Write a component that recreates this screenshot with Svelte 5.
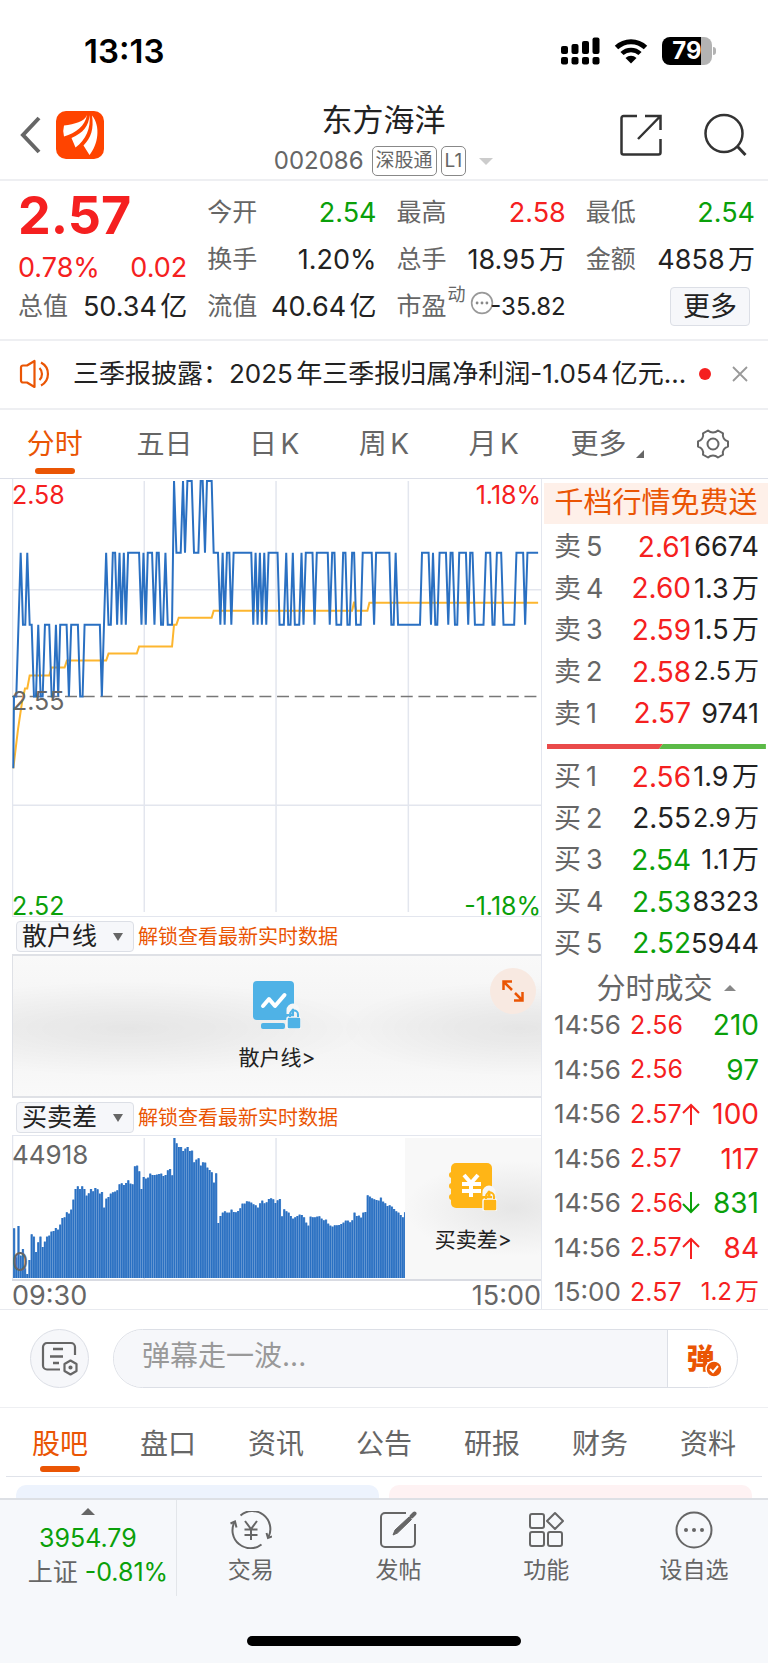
<script>
  const periods = ['分时', '五日', '日K', '周K', '月K'];
  const sections = ['股吧', '盘口', '资讯', '公告', '研报', '财务', '资料'];

  const sells = [
    { side: '卖', level: 5, price: '2.61', tone: 'up', qty: '6674' },
    { side: '卖', level: 4, price: '2.60', tone: 'up', qty: '1.3万' },
    { side: '卖', level: 3, price: '2.59', tone: 'up', qty: '1.5万' },
    { side: '卖', level: 2, price: '2.58', tone: 'up', qty: '2.5万', small: true },
    { side: '卖', level: 1, price: '2.57', tone: 'up', qty: '9741' }
  ];
  const buys = [
    { side: '买', level: 1, price: '2.56', tone: 'up', qty: '1.9万' },
    { side: '买', level: 2, price: '2.55', tone: 'flat', qty: '2.9万', small: true },
    { side: '买', level: 3, price: '2.54', tone: 'down', qty: '1.1万' },
    { side: '买', level: 4, price: '2.53', tone: 'down', qty: '8323' },
    { side: '买', level: 5, price: '2.52', tone: 'down', qty: '5944' }
  ];
  const trades = [
    { time: '14:56', price: '2.56', dir: '', qty: '210', tone: 'down' },
    { time: '14:56', price: '2.56', dir: '', qty: '97', tone: 'down' },
    { time: '14:56', price: '2.57', dir: 'up', qty: '100', tone: 'up' },
    { time: '14:56', price: '2.57', dir: '', qty: '117', tone: 'up' },
    { time: '14:56', price: '2.56', dir: 'down', qty: '831', tone: 'down' },
    { time: '14:56', price: '2.57', dir: 'up', qty: '84', tone: 'up' },
    { time: '15:00', price: '2.57', dir: '', qty: '1.2万', tone: 'up', small: true }
  ];

  // Price levels of the intraday line: A 2.58, B 2.57, C 2.56, D 2.55, E 2.54.
  const levelY = { A: 2, B: 74, C: 146, D: 218, E: 290 };
  const ticks =
    '40E 42D 49D 62B 69C 76C 82B 89C 95C 102D 108D 115C 122D 128D 135C 148C 155D 161D 168C 175D 181C 200C 207D 214C 234C 241D 248D 254C 300C 306D ' +
    '319B 326C 333C 339B 346B 352C 359B 365C 372B 378C 385B 418B 425C 431B 438C 444B 457B 464C 471B 477B 484C 490C 497B 504C 517C ' +
    '523A 530B 543B 550A 556B 563A 576A 583B 596B 603A 609A 616B 622A 636A 642B 655B 662C 669B 675C 682B 689B 695C 702B 755B 761C 768B 774C 781B 787C 794B 800C 807B 834B ' +
    '840C 853C 860B 866C 873C 880B 886C 899C 906B 912C 919B 939B 945C 952B 985B 991C 998B 1005B 1011C 1025C 1031B 1038B 1044C 1051C 1058B 1064B 1070C 1084C 1090B 1117B 1124C ' +
    '1130B 1170B 1176C 1183C 1189B 1196C 1262C 1268B 1288B 1295C 1301B 1308C 1314C 1321B 1340B 1347C 1354B 1360B 1367C 1374C 1380B 1400B 1407C 1413B 1420B 1427C 1453C ' +
    '1460B 1473B 1480C 1486C 1493B 1506B 1513C 1545C 1552B 1572B 1578C 1585B 1617B';
  const pricePoints = ticks
    .split(' ')
    .map((t) => `${(parseInt(t) / 3 - 12).toFixed(1)},${levelY[t.slice(-1)]}`)
    .join(' ');

  const average = [
    [40, 290], [54, 251], [66, 224], [75, 210], [82, 210], [89, 197], [148, 197], [155, 189], [194, 189], [201, 182],
    [319, 182], [326, 175], [411, 175], [418, 168], [517, 168], [523, 146], [530, 146], [537, 139], [636, 139],
    [642, 132], [1058, 132], [1064, 123], [1070, 132], [1104, 132], [1110, 124], [1617, 124]
  ];
  const averagePoints = average.map(([x, y]) => `${(x / 3 - 12).toFixed(1)},${y}`).join(' ');

  const volume = [
    149, 62, 156, 67, 87, 29, 12, 54, 131, 124, 78, 107, 124, 93, 109, 124, 127, 139, 141, 150, 145, 160, 180, 182, 197,
    193, 205, 235, 267, 275, 267, 275, 267, 247, 254, 267, 260, 270, 266, 253, 258, 211, 238, 243, 253, 257, 259, 263,
    281, 284, 279, 285, 293, 283, 281, 335, 337, 320, 267, 303, 298, 301, 313, 309, 309, 310, 312, 313, 306, 309, 323,
    327, 308, 420, 404, 393, 393, 381, 388, 393, 381, 382, 347, 355, 359, 337, 347, 346, 331, 324, 317, 286, 314, 165,
    186, 196, 200, 196, 196, 205, 198, 197, 201, 209, 223, 223, 230, 229, 226, 221, 218, 211, 224, 232, 224, 227, 237,
    239, 236, 225, 233, 237, 185, 206, 200, 196, 186, 178, 182, 186, 190, 189, 182, 166, 157, 184, 182, 182, 184, 185,
    178, 173, 175, 163, 157, 154, 158, 158, 159, 162, 166, 172, 172, 167, 173, 196, 186, 187, 181, 196, 198, 248, 244,
    239, 236, 234, 232, 241, 229, 224, 216, 218, 214, 207, 200, 196, 189, 182, 197
  ];
  const bars = volume.map((v, i) => ({ x: 1 + i * 2.2, h: v / 3 }));
</script>

{#snippet ladder(rows, name)}
  <table class="ladder" aria-label={name}>
    <tbody>
      {#each rows as row}
        <tr>
          <th scope="row"><span>{row.side}</span><span>{row.level}</span></th>
          <td class="price {row.tone}">{row.price}</td>
          <td class="qty" class:small={row.small}>{row.qty}</td>
        </tr>
      {/each}
    </tbody>
  </table>
{/snippet}

{#snippet lock(color)}
  <path d="M36 33v-4a4 4 0 0 1 8 0v4" fill="none" stroke="#f7f7f7" stroke-width="5" />
  <rect x="34" y="36" width="14" height="12" rx="2" fill={color} stroke="#f7f7f7" stroke-width="1.500" />
  <path d="M37 36v-2.500a4 4 0 0 1 8 0V36" fill="none" stroke={color} stroke-width="2" />
{/snippet}

<div class="phone">
  <div class="status">
    <time>13:13</time>
    <div class="status-icons">
      <svg width="39" height="28" viewBox="0 0 39 28" aria-hidden="true">
        <g>
          <rect x="0" y="9" width="7" height="8" rx="2" /><rect x="10.500" y="7" width="7" height="10" rx="2" />
          <rect x="21" y="4" width="7" height="13" rx="2" /><rect x="31.500" y="0.500" width="7" height="16.500" rx="2" />
          <rect x="0" y="20" width="7" height="7.500" rx="2" /><rect x="10.500" y="20" width="7" height="7.500" rx="2" />
          <rect x="21" y="20" width="7" height="7.500" rx="2" /><rect x="31.500" y="20" width="7" height="7.500" rx="2" />
        </g>
      </svg>
      <svg class="wifi" width="34" height="26" viewBox="0 0 34 26" aria-hidden="true">
        <path d="M2.500 9.500A21 21 0 0 1 31.500 9.500" fill="none" stroke="#000" stroke-width="5" />
        <path d="M8 15.500a13 13 0 0 1 18 0" fill="none" stroke="#000" stroke-width="4.500" />
        <path d="M11.500 20a8 8 0 0 1 11 0L17 25.500z" />
      </svg>
      <div class="battery"><span>79</span></div>
    </div>
  </div>

  <header>
    <div class="head-left">
      <button aria-label="返回">
        <svg width="22" height="38" viewBox="0 0 22 38"><path d="M19 2 3 19l16 17" fill="none" stroke="#666" stroke-width="4" /></svg>
      </button>
      <svg class="logo" width="48" height="48" viewBox="0 0 48 48" role="img" aria-label="东方财富">
        <rect width="48" height="48" rx="10" fill="#ff4400" />
        <g fill="#fff">
          <path d="M31 4C28 11 19 13 8 14.500q-1.500 5 0 11C20 22 29 15 31 4z" />
          <path d="M33.500 4C33 15 27 22 15.500 27l4 9.500C30 29 35 17 33.500 4z" />
          <path d="M36 4.500C38 18 35 27 27.500 34.500L33.500 44C42 34 45 15 36 4.500z" />
        </g>
      </svg>
    </div>
    <div class="title">
      <h1>东方海洋</h1>
      <p><span class="code">002086</span><span class="tag">深股通</span><span class="tag">L1</span><i class="caret"></i></p>
    </div>
    <div class="head-right">
      <button aria-label="分享">
        <svg width="44" height="44" viewBox="0 0 44 44" fill="none" stroke="#333" stroke-width="2.500">
          <path d="M18 3H4.500a2 2 0 0 0-2 2v34.500a2 2 0 0 0 2 2h35a2 2 0 0 0 2-2V26M26 3h15.500v14M41 3.500 19 26" />
        </svg>
      </button>
      <button aria-label="搜索">
        <svg width="44" height="44" viewBox="0 0 44 44" fill="none" stroke="#333" stroke-width="2.500">
          <circle cx="21" cy="20.500" r="18.500" /><path d="m34 33 8.500 9" stroke-width="3" />
        </svg>
      </button>
    </div>
  </header>

  <section class="quote">
    <div class="last up">
      <strong>2.57</strong>
      <div class="change"><span>0.78%</span><span>0.02</span></div>
    </div>
    <div class="cell"><span>今开</span><b class="down">2.54</b></div>
    <div class="cell"><span>最高</span><b class="up">2.58</b></div>
    <div class="cell"><span>最低</span><b class="down">2.54</b></div>
    <div class="cell"><span>换手</span><b>1.20%</b></div>
    <div class="cell"><span>总手</span><b>18.95万</b></div>
    <div class="cell"><span>金额</span><b>4858万</b></div>
    <div class="cell"><span>总值</span><b>50.34亿</b></div>
    <div class="cell"><span>流值</span><b>40.64亿</b></div>
    <div class="cell pe">
      <span>市盈<sup>动</sup></span>
      <b>
        <svg width="24" height="24" viewBox="0 0 22 22" aria-hidden="true">
          <circle cx="11" cy="11" r="9.500" fill="none" stroke="#999" stroke-width="1.500" />
          <g fill="#888"><circle cx="6.500" cy="11" r="1.300" /><circle cx="11" cy="11" r="1.300" /><circle cx="15.500" cy="11" r="1.300" /></g>
        </svg>-35.82
      </b>
    </div>
    <div class="cell end"><button class="more">更多</button></div>
  </section>

  <section class="notice">
    <svg width="34" height="30" viewBox="0 0 34 30" fill="none" stroke="#ea5504" stroke-width="2.200" aria-hidden="true">
      <path d="M2 8.500a2 2 0 0 1 2-2h4L15.500 2v26L8 23.500H4a2 2 0 0 1-2-2z" stroke-linejoin="round" />
      <path d="M20.500 9a8.500 8.500 0 0 1 0 12M22 3.500a13 13 0 0 1 0 23" />
    </svg>
    <a href="#notice">三季报披露：2025年三季报归属净利润-1.054亿元...</a>
    <i class="dot"></i>
    <button aria-label="关闭">
      <svg width="16" height="16" viewBox="0 0 16 16"><path d="m1 1 14 14M15 1 1 15" stroke="#999" stroke-width="1.800" /></svg>
    </button>
  </section>

  <nav class="tabs periods">
    {#each periods as name, i}
      <button class:active={i === 0}>{name}</button>
    {/each}
    <button class="other">更多<i class="corner"></i></button>
    <button aria-label="设置">
      <svg width="34" height="34" viewBox="0 0 34 34" fill="none" stroke="#666" stroke-width="2">
        <path d="M12 3.500c2 1.800 3.500 2 5 2s3-.2 5-2l5 2.800c-.6 2.700 0 4 .8 5.200.8 1.200 1.800 2.100 4.200 2.900v5.200c-2.400.8-3.400 1.700-4.200 2.900-.8 1.200-1.400 2.500-.8 5.200l-5 2.800c-2-1.800-3.500-2-5-2s-3 .2-5 2l-5-2.800c.6-2.700 0-4-.8-5.200-.8-1.200-1.800-2.100-4.200-2.900v-5.200c2.400-.8 3.400-1.700 4.200-2.900.8-1.200 1.400-2.500.8-5.200z" stroke-linejoin="round" />
        <circle cx="17" cy="17" r="5.500" />
      </svg>
    </button>
  </nav>

  <main>
    <div class="charts">
      <div class="chart price-chart">
        <svg viewBox="0 0 530 438" preserveAspectRatio="none" aria-label="分时走势">
          <g stroke="#e3e6ee" stroke-width="1.500">
            <path d="M0.500 0v438M132.500 2v432M264.500 2v432M397 2v432M0 111h530M0 327h530" />
          </g>
          <path d="M0 218h528" stroke="#777" stroke-width="1.500" stroke-dasharray="12 5.700" />
          <polyline points={averagePoints} fill="none" stroke="#fdb62f" stroke-width="2" />
          <polyline points={pricePoints} fill="none" stroke="#2a70c2" stroke-width="2" />
        </svg>
        <span class="mark tl up">2.58</span>
        <span class="mark tr up">1.18%</span>
        <span class="mark ml">2.55</span>
        <span class="mark bl down">2.52</span>
        <span class="mark br down">-1.18%</span>
      </div>

      <div class="indicator">
        <button class="pick">散户线<i></i></button>
        <a href="#unlock">解锁查看最新实时数据</a>
      </div>
      <div class="locked">
        <a href="#retail">
          <svg width="48" height="48" viewBox="0 0 48 48" aria-hidden="true">
            <rect width="41" height="39" rx="4" fill="#4fb2e6" />
            <path d="m10 25 6-7 6 7 9.500-11" fill="none" stroke="#fff" stroke-width="4" stroke-linecap="round" stroke-linejoin="round" />
            <rect x="8" y="42" width="24" height="6" rx="2" fill="#4fb2e6" />
            {@render lock('#4fb2e6')}
          </svg>
          散户线&gt;
        </a>
        <button class="expand" aria-label="展开">
          <svg width="22" height="22" viewBox="0 0 22 22" fill="none" stroke="#ea5504" stroke-width="2.500">
            <path d="M1.500 10V1.500H10M2 2l8 8M20.500 12v8.500H12M20 20l-7-7" />
          </svg>
        </button>
      </div>

      <div class="indicator">
        <button class="pick">买卖差<i></i></button>
        <a href="#unlock">解锁查看最新实时数据</a>
      </div>
      <div class="chart volume-chart">
        <svg viewBox="0 0 530 143" preserveAspectRatio="none" aria-label="买卖差">
          <path d="M0.500 0v143M132.500 2v141M264.500 2v141" stroke="#e3e6ee" stroke-width="1.500" />
          {#each bars as bar}
            <rect x={bar.x} y={142 - bar.h} width="2.300" height={bar.h} fill="#5a90d0" />
            <rect x={bar.x + 0.3} y={142 - bar.h} width="1.500" height={bar.h} fill="#2a70c2" />
          {/each}
        </svg>
        <span class="mark tl">44918</span>
        <span class="mark bl">0</span>
        <a class="volume-lock" href="#diff">
          <svg width="48" height="48" viewBox="0 0 48 48" aria-hidden="true">
            <rect x="2" width="41" height="45" rx="5" fill="#ffb516" />
            <g fill="#ffb516"><circle cx="3" cy="12" r="3" /><circle cx="3" cy="23" r="3" /><circle cx="3" cy="34" r="3" /></g>
            <path d="m15 12 7 8 7-8M22 20v14M13 21h19M13 28h19" fill="none" stroke="#fff" stroke-width="4" />
            {@render lock('#ffb516')}
          </svg>
          买卖差&gt;
        </a>
      </div>
      <div class="axis"><span>09:30</span><span>15:00</span></div>
    </div>

    <aside>
      <a class="banner" href="#depth">千档行情免费送</a>
      {@render ladder(sells, '卖盘')}
      <svg class="ratio" viewBox="0 0 219 5" preserveAspectRatio="none" aria-hidden="true">
        <path d="M0 0h116l-4 5H0z" fill="#ea4a4a" /><path d="M116 0h103v5H112z" fill="#5bba47" />
      </svg>
      {@render ladder(buys, '买盘')}
      <button class="trades-head">分时成交<i></i></button>
      <table class="trades" aria-label="分时成交">
        <tbody>
          {#each trades as t}
            <tr>
              <td class="time">{t.time}</td>
              <td class="up">{t.price}</td>
              <td class="arrow {t.dir}">
                {#if t.dir}
                  <svg width="18" height="22" viewBox="0 0 18 22" fill="none" stroke="currentColor" stroke-width="2">
                    <path d={t.dir === 'up' ? 'M9 22V2M1 10l8-8 8 8' : 'M9 0v20M1 12l8 8 8-8'} />
                  </svg>
                {/if}
              </td>
              <td class="amount {t.tone}" class:small={t.small}>{t.qty}</td>
            </tr>
          {/each}
        </tbody>
      </table>
    </aside>
  </main>

  <section class="comment">
    <button class="round" aria-label="弹幕设置">
      <svg width="38" height="36" viewBox="0 0 38 36" fill="none" stroke="#666" stroke-width="2.200">
        <path d="M19 28.500H6a4 4 0 0 1-4-4V6a4 4 0 0 1 4-4h24a4 4 0 0 1 4 4v8" />
        <path d="M12 8h10M9 15.500h13M12 22h6" stroke-width="2.500" />
        <path d="m29.500 19.500 6 3.500v7l-6 3.500-6-3.500v-7z" stroke-linejoin="round" /><circle cx="29.500" cy="26.500" r="1" />
      </svg>
    </button>
    <form>
      <input type="text" placeholder="弹幕走一波..." aria-label="弹幕" />
      <button type="button" aria-label="弹幕开关">
        <span>弹</span>
        <svg width="18" height="18" viewBox="-1 -1 18 18"><circle cx="8" cy="8" r="8" fill="#ea5504" stroke="#fff" stroke-width="1.500" /><path d="m4 8 3 3 5-6" fill="none" stroke="#fff" stroke-width="2" /></svg>
      </button>
    </form>
  </section>

  <nav class="tabs sections">
    {#each sections as name, i}
      <button class:active={i === 0}>{name}</button>
    {/each}
  </nav>
  <div class="cards"><div class="card blue"></div><div class="card pink"></div></div>

  <footer>
    <div class="bar">
      <button class="index">
        <i></i>
        <span class="down">3954.79</span>
        <span>上证 <b class="down">-0.81%</b></span>
      </button>
      <button>
        <svg width="42" height="38" viewBox="0 0 42 38" fill="none" stroke="#666" stroke-width="2">
          <path d="M10.500 4.500A18 18 0 0 1 38.500 26M31.500 33.500A18 18 0 0 1 4.500 11" />
          <path d="M0.500 12.500 5 10.500l1.500 6M42 25.500 38 27l-1.500-5" />
          <path d="m15 10 6 8 6-8M21 18v11M14.500 18.500h13M14.500 24h13" />
        </svg>
        交易
      </button>
      <button>
        <svg width="38" height="38" viewBox="0 0 38 38" fill="none" stroke="#666" stroke-width="2">
          <path d="M27 2H6a4 4 0 0 0-4 4v26a4 4 0 0 0 4 4h26a4 4 0 0 0 4-4V13" />
          <path d="m14 24 2-5L30 6l2.500 2.500L18.500 22z" fill="#666" stroke-width="1" /><path d="M32.500 5.500 35.500 2.500" stroke-width="4" stroke-linecap="round" />
        </svg>
        发帖
      </button>
      <button>
        <svg width="36" height="38" viewBox="0 0 36 38" fill="none" stroke="#666" stroke-width="2">
          <rect x="2" y="3" width="14" height="14" rx="2" /><rect x="2" y="21" width="14" height="14" rx="2" />
          <rect x="20" y="21" width="14" height="14" rx="2" /><path d="m27 2 8 8-8 8-8-8z" stroke-linejoin="round" />
        </svg>
        功能
      </button>
      <button>
        <svg width="38" height="38" viewBox="0 0 38 38" fill="none" stroke="#666" stroke-width="2">
          <circle cx="19" cy="19" r="17.500" />
          <g fill="#666" stroke="none"><circle cx="11" cy="19" r="2" /><circle cx="19" cy="19" r="2" /><circle cx="27" cy="19" r="2" /></g>
        </svg>
        设自选
      </button>
    </div>
    <div class="home"></div>
  </footer>
</div>

<style>
  :global(body) {
    background: #fff;
  }
  .phone {
    font-family: Inter, 'Noto Sans CJK SC', sans-serif;
    text-autospace: normal;
    color: #222;
    background: #fff;
    line-height: 1;
    white-space: nowrap;
    overflow: hidden;
  }
  button {
    font: inherit;
    color: inherit;
    background: none;
    border: 0;
    padding: 0;
    margin: 0;
    line-height: inherit;
    white-space: nowrap;
    cursor: pointer;
    text-autospace: inherit;
  }
  a {
    color: inherit;
    text-decoration: none;
  }
  b {
    font-weight: 400;
  }
  svg {
    display: block;
    flex: none;
  }
  .up {
    color: #f52020;
  }
  .down {
    color: #0aa00a;
  }
  .flat {
    color: #222;
  }

  .status {
    display: flex;
    justify-content: space-between;
    align-items: center;
    height: 90px;
    padding: 12px 56px 0 84px;
    box-sizing: border-box;
    color: #000;
  }
  .status time {
    font-size: 33px;
    font-weight: 600;
  }
  .status-icons {
    display: flex;
    align-items: center;
    gap: 14px;
  }
  .battery {
    position: relative;
    width: 50px;
    height: 28px;
    border-radius: 8px;
    background: linear-gradient(90deg, #000 78%, #b3b3b3 78%);
    color: #fff;
    font-size: 24px;
    font-weight: 700;
    line-height: 28px;
    text-align: center;
  }
  .battery::after {
    content: '';
    position: absolute;
    right: -4px;
    top: 10px;
    width: 3px;
    height: 8px;
    border-radius: 0 3px 3px 0;
    background: #b3b3b3;
  }

  header {
    display: grid;
    grid-template-columns: 1fr auto 1fr;
    align-items: center;
    height: 91px;
    padding: 0 21px 0 20px;
    box-sizing: border-box;
    border-bottom: 2px solid #eeeff2;
  }
  .head-left,
  .head-right {
    display: flex;
    align-items: center;
  }
  .head-left {
    gap: 14px;
  }
  .head-right {
    justify-content: flex-end;
    gap: 40px;
  }
  .title {
    padding-top: 7px;
    text-align: center;
  }
  h1 {
    margin: 0 0 6px;
    font-size: 31px;
    font-weight: 400;
    line-height: 40px;
  }
  .title p {
    display: flex;
    align-items: center;
    justify-content: center;
    gap: 4px;
    margin: 0;
    line-height: 30px;
    color: #666;
  }
  .code {
    font-size: 24px;
    margin-right: 4px;
  }
  .tag {
    height: 30px;
    box-sizing: border-box;
    padding: 0 3px;
    border: 1px solid #888;
    border-radius: 5px;
    font-size: 19px;
    line-height: 28px;
  }
  .caret {
    margin-left: 9px;
    border: 7px solid transparent;
    border-top-color: #ccc;
    border-bottom: 0;
  }

  .quote {
    display: grid;
    grid-template-columns: repeat(4, minmax(0, 1fr));
    grid-auto-rows: 47px;
    column-gap: 20px;
    padding: 8px 13px 9px 18px;
    border-bottom: 2px solid #eeeff2;
  }
  .last {
    grid-row: span 2;
  }
  .last strong {
    display: block;
    font-size: 52px;
    font-weight: 700;
    line-height: 54px;
  }
  .change {
    display: flex;
    justify-content: space-between;
    margin-top: 10px;
    font-size: 27px;
    line-height: 30px;
  }
  .cell {
    display: flex;
    justify-content: space-between;
    align-items: center;
  }
  .cell span {
    font-size: 25px;
    color: #666;
  }
  .cell b {
    font-size: 27px;
  }
  .pe span {
    display: flex;
  }
  .pe sup {
    font-size: 18px;
    line-height: 18px;
    margin: -8px 0 0 1px;
    vertical-align: top;
  }
  .pe b {
    display: flex;
    align-items: center;
    font-size: 24px;
  }
  .pe svg {
    margin: -8px -4px 0 0;
  }
  .end {
    justify-content: flex-end;
    padding-right: 5px;
  }
  .more {
    height: 39px;
    padding: 0 12px;
    border: 1px solid #dcdfe6;
    border-radius: 4px;
    background: #f6f7fa;
    font-size: 27px;
  }

  .notice {
    display: flex;
    align-items: center;
    height: 69px;
    padding: 0 20px 2px 19px;
    box-sizing: border-box;
    border-bottom: 2px solid #eeeff2;
  }
  .notice a {
    flex: 1;
    min-width: 0;
    margin: 0 8px 0 20px;
    font-size: 26px;
    line-height: 36px;
  }
  .dot {
    width: 12px;
    height: 12px;
    border-radius: 50%;
    background: #f52020;
    margin-right: 21px;
  }

  .tabs {
    display: grid;
    grid-template-columns: repeat(7, minmax(0, 1fr));
    height: 69px;
    box-sizing: border-box;
    color: #666;
    font-size: 28px;
  }
  .tabs button {
    display: flex;
    position: relative;
    align-items: center;
    justify-content: center;
  }
  .tabs .active {
    color: #ea5504;
  }
  .tabs .active::after {
    content: '';
    position: absolute;
    left: 50%;
    bottom: 4px;
    width: 40px;
    height: 6px;
    margin-left: -20px;
    border-radius: 3px;
    background: #ea5504;
  }
  .periods {
    border-bottom: 1px solid #dcdfe8;
  }
  .sections {
    margin: 0 6px;
    border-bottom: 1px solid #e0e3ea;
  }
  .sections button {
    padding-top: 3px;
  }
  .tabs .other {
    padding-left: 8px;
  }
  .corner {
    align-self: flex-end;
    margin: 0 0 20px 10px;
    border: 4px solid transparent;
    border-right-color: #666;
    border-bottom-color: #666;
  }

  main {
    display: grid;
    grid-template-columns: minmax(0, 12fr) minmax(0, 5fr);
    border-bottom: 1px solid #e8eaef;
  }
  .charts {
    padding-left: 12px;
    border-right: 1px solid #e3e6ee;
  }
  .chart {
    position: relative;
    box-sizing: border-box;
    color: #666;
  }
  .chart > svg {
    width: 100%;
    height: 100%;
  }
  .price-chart {
    height: 438px;
    border-bottom: 1px solid #e3e6ee;
  }
  .volume-chart {
    height: 146px;
    border-top: 1px solid #e3e6ee;
    border-bottom: 2px solid #d9dbe2;
  }
  .mark {
    position: absolute;
    font-size: 25px;
    line-height: 24px;
  }
  .tl {
    left: 0;
    top: 4px;
  }
  .tr {
    right: 0;
    top: 4px;
  }
  .ml {
    left: 0;
    top: 210px;
  }
  .bl {
    left: 0;
    bottom: -2px;
  }
  .br {
    right: 0;
    bottom: -2px;
  }
  .volume-chart .mark {
    font-size: 26px;
  }
  .volume-chart .tl {
    top: 7px;
  }
  .volume-chart .bl {
    bottom: 5px;
  }
  .indicator {
    display: flex;
    align-items: center;
    gap: 4px;
    height: 37px;
    box-sizing: border-box;
    padding: 2px 0 0 4px;
    font-size: 20px;
    color: #ea5504;
  }
  .pick {
    display: flex;
    align-items: center;
    justify-content: space-between;
    width: 118px;
    height: 31px;
    padding: 0 10px 0 5px;
    border: 1px solid #dcdfe6;
    border-radius: 4px;
    background: #f6f7fa;
    color: #222;
    font-size: 25px;
  }
  .pick i {
    border: 5px solid transparent;
    border-top: 8px solid #666;
    border-bottom: 0;
  }
  .locked {
    position: relative;
    height: 144px;
    box-sizing: border-box;
    border: solid #dfe1e6;
    border-width: 2px 0 2px 1px;
    background:
      radial-gradient(ellipse 45% 34% at 22% 52%, rgba(0, 0, 0, 0.06), transparent),
      radial-gradient(ellipse 34% 34% at 96% 52%, rgba(0, 0, 0, 0.06), transparent),
      linear-gradient(#f9f9f9, #f3f3f3 50%, #f9f9f9);
  }
  .locked a,
  .volume-lock {
    display: flex;
    flex-direction: column;
    align-items: center;
    gap: 18px;
    padding-top: 25px;
    font-size: 21px;
    color: #222;
  }
  .expand {
    position: absolute;
    top: 12px;
    right: 5px;
    display: grid;
    place-items: center;
    width: 46px;
    height: 46px;
    border-radius: 50%;
    background: #f8e9e1;
  }
  .volume-lock {
    position: absolute;
    top: 2px;
    right: 0;
    bottom: 0;
    width: 136px;
    box-sizing: border-box;
    background: radial-gradient(ellipse 80% 34% at 80% 50%, #e6e6e6, transparent), #f8f8f8;
  }
  .axis {
    display: flex;
    justify-content: space-between;
    height: 28px;
    font-size: 27px;
    line-height: 30px;
    color: #666;
  }

  aside {
    display: flex;
    flex-direction: column;
  }
  .banner {
    height: 41px;
    margin: 4px 0 2px 2px;
    background: #fef0e9;
    color: #ea5504;
    font-size: 29px;
    line-height: 40px;
    text-align: center;
  }
  .ladder {
    display: block;
    height: 208px;
    padding: 0 9px 0 12px;
  }
  .ladder tbody {
    display: grid;
    grid-auto-rows: 1fr;
    height: 100%;
  }
  .ladder tr {
    display: grid;
    grid-template-columns: 1fr auto 68px;
    align-items: center;
  }
  th,
  td {
    padding: 0;
    font-weight: 400;
    text-align: left;
  }
  .ladder th {
    display: flex;
    gap: 5px;
    font-size: 27px;
    color: #666;
  }
  .ladder .price {
    font-size: 28px;
  }
  .ladder .qty {
    font-size: 27px;
    text-align: right;
  }
  .ladder .small,
  .trades .small {
    font-size: 25px;
  }
  .ratio {
    width: auto;
    height: 5px;
    margin: 10px 2px 7px 5px;
  }
  .trades-head {
    display: flex;
    align-items: center;
    justify-content: center;
    gap: 11px;
    height: 44px;
    padding-top: 4px;
    padding-left: 22px;
    font-size: 29px;
    color: #666;
  }
  .trades-head i {
    border: 6px solid transparent;
    border-bottom-color: #888;
    border-top: 0;
  }
  .trades {
    display: block;
    flex: 1;
    padding: 0 9px 0 12px;
    font-size: 25px;
    color: #666;
  }
  .trades .time {
    font-size: 26px;
  }
  .trades tbody {
    display: flex;
    flex-direction: column;
    justify-content: space-between;
    height: 100%;
  }
  .trades tr {
    display: grid;
    grid-template-columns: 76px 52px 18px 1fr;
    align-items: center;
    height: 34px;
  }
  .trades .amount {
    font-size: 28px;
    text-align: right;
  }
  .trades .amount.small {
    font-size: 24px;
  }

  .comment {
    display: flex;
    align-items: center;
    gap: 24px;
    height: 98px;
    padding: 0 30px;
    box-sizing: border-box;
    border-bottom: 1px solid #eeeff2;
  }
  .round {
    display: grid;
    place-items: center;
    width: 59px;
    height: 59px;
    border: 1px solid #dcdfe6;
    border-radius: 50%;
    background: #f6f7fa;
  }
  form {
    display: flex;
    flex: 1;
    height: 57px;
    border: 1px solid #dcdfe6;
    border-radius: 30px;
    overflow: hidden;
  }
  input {
    flex: 1;
    min-width: 0;
    border: 0;
    border-right: 1px solid #dcdfe6;
    padding: 0 28px 5px;
    background: #f6f7fa;
    font: inherit;
    font-size: 28px;
    outline: 0;
  }
  input::placeholder {
    color: #999;
  }
  form button {
    position: relative;
    width: 69px;
    padding-right: 4px;
    color: #ea5504;
    font-size: 28px;
    font-weight: 900;
  }
  form svg {
    position: absolute;
    right: 14px;
    bottom: 9px;
  }

  .cards {
    display: grid;
    grid-template-columns: 1fr 1fr;
    gap: 10px;
    padding: 8px 16px 0;
  }
  .card {
    height: 13px;
    border-radius: 10px 10px 0 0;
  }
  .blue {
    background: #edf3fd;
  }
  .pink {
    background: #fef2f3;
  }

  footer {
    border-top: 2px solid #dde0e5;
    background: #f6f8fb;
    padding-bottom: 17px;
  }
  .bar {
    display: grid;
    grid-template-columns: 177fr repeat(4, 148fr);
    height: 96px;
    color: #666;
    font-size: 23px;
  }
  .bar button {
    display: flex;
    flex-direction: column;
    align-items: center;
    gap: 10px;
    padding-top: 11px;
  }
  .bar .index {
    gap: 0;
    padding-top: 8px;
    border-right: 1px solid #e3e6ea;
    font-size: 25px;
    line-height: 34px;
  }
  .index i {
    margin-bottom: 6px;
    border: 7px solid transparent;
    border-bottom-color: #666;
    border-top: 0;
  }
  .index > span:last-child {
    padding-left: 20px;
  }
  .home {
    width: 274px;
    height: 10px;
    margin: 40px auto 0;
    border-radius: 5px;
    background: #000;
  }
</style>
